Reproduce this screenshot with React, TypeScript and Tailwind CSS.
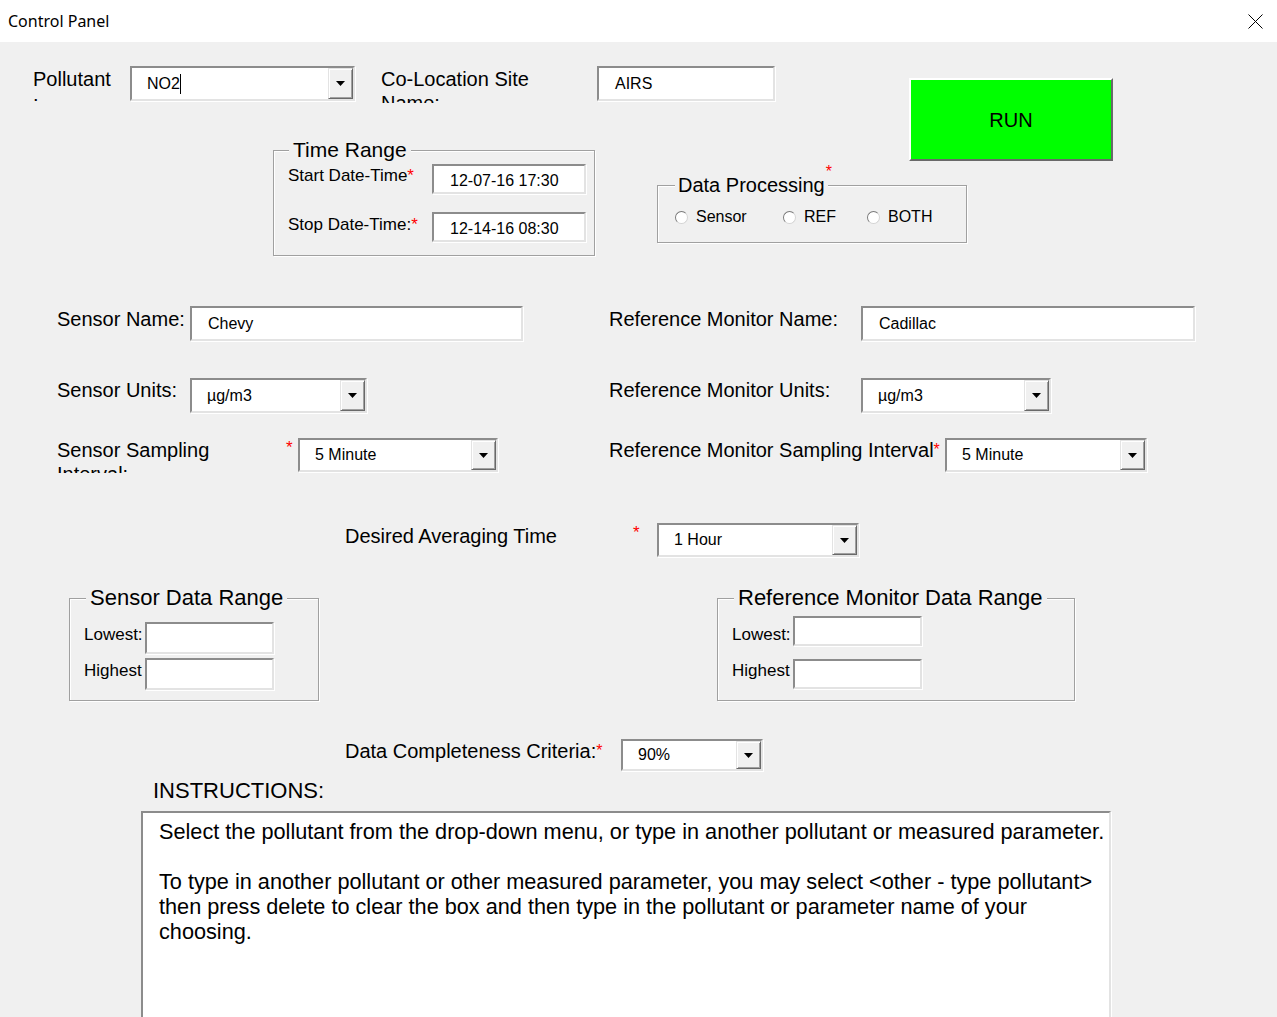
import React from 'react';

// ─── Win32-style borders ──────────────────────────────────────────────────────

const sunken =
  'bg-white border-2 border-t-[#8c8c8c] border-l-[#8c8c8c] border-r-[#e3e3e3] border-b-[#e3e3e3] shadow-[1px_1px_0_#ffffff]';
const etched = 'border border-[#a0a0a0] shadow-[1px_1px_0_#ffffff,inset_1px_1px_0_#ffffff]';
const label = 'shrink-0 whitespace-nowrap text-[20px] leading-[24px]';

const Star = ({ className = '' }: { className?: string }) => (
  <span className={`text-[#ff0000] ${className}`}>*</span>
);

const TextBox = ({ size, value = '', pt = '' }: { size: string; value?: string; pt?: string }) => (
  <div className={`${sunken} ${size} ${pt} shrink-0 flex items-center pl-[16px] text-[16px]`}>{value}</div>
);

const DropButton = () => (
  <div className="w-[25px] h-full shrink-0 bg-[#f0f0f0] border border-t-[#e3e3e3] border-l-[#e3e3e3] border-r-[#696969] border-b-[#696969] shadow-[inset_1px_1px_0_#ffffff,inset_-1px_-1px_0_#a0a0a0] flex items-center justify-center">
    <svg width="9" height="5" viewBox="0 0 9 5">
      <path d="M0 0h9L4.5 5z" fill="#000" />
    </svg>
  </div>
);

const Combo = ({ size, value, caret = false }: { size: string; value: string; caret?: boolean }) => (
  <div className={`${sunken} ${size} shrink-0 flex items-stretch`}>
    <div className="flex-1 flex items-center pl-[15px] text-[16px]">
      {value}
      {caret && <span className="w-px h-[20px] bg-black" />}
    </div>
    <DropButton />
  </div>
);

const Radio = ({ text, width }: { text: string; width: string }) => (
  <div className={`flex items-center gap-[8px] ${width}`}>
    <span className="w-[13px] h-[13px] rounded-full bg-white border border-t-[#7a7a7a] border-l-[#7a7a7a] border-r-[#d4d4d4] border-b-[#d4d4d4]" />
    <span className="text-[16px] leading-[20px]">{text}</span>
  </div>
);

// ─── Page ─────────────────────────────────────────────────────────────────────

export default function App() {
  return (
    <div className="w-[1277px] h-[1017px] overflow-hidden bg-[#f0f0f0] text-black font-['Liberation_Sans',Arial,sans-serif]">
      {/* ── Title bar ── */}
      <div className="h-[42px] bg-white flex items-center justify-between pl-[8px]">
        <span className="text-[16px] font-['Noto_Sans',sans-serif]">Control Panel</span>
        <div className="w-[44px] h-[42px] flex items-center justify-center">
          <svg width="15" height="15" viewBox="0 0 15 15">
            <path d="M0.5 0.5l14 14M14.5 0.5l-14 14" stroke="#000" strokeWidth="1" />
          </svg>
        </div>
      </div>

      <div className="pt-[24px]">
        {/* ── Row 1: pollutant / site / run ── */}
        <div className="flex items-start h-[35px]">
          <div className={`${label} ml-[33px] w-[97px] h-[37px] overflow-hidden pt-[1px]`}>
            Pollutant
            <br />:
          </div>
          <Combo size="w-[225px] h-[35px]" value="NO2" caret />
          <div className={`${label} ml-[26px] w-[216px] h-[37px] overflow-hidden pt-[1px]`}>
            Co-Location Site
            <br />
            Name:
          </div>
          <TextBox size="w-[178px] h-[35px]" value="AIRS" />
          <button className="ml-[134px] mt-[12px] w-[204px] h-[83px] shrink-0 bg-[#00ff00] border-2 border-t-white border-l-white border-r-[#696969] border-b-[#696969] text-[20px] flex items-center justify-center">
            RUN
          </button>
        </div>

        {/* ── Row 2: time range / data processing ── */}
        <div className="flex items-start mt-[37px]">
          <fieldset className={`${etched} ml-[273px] w-[322px] h-[118px] shrink-0 pl-[14px]`}>
            <legend className="ml-[1px] px-[4px] bg-[#f0f0f0] text-[21px] leading-[24px]">Time Range</legend>
            <div className="flex items-start mt-[2px]">
              <div className="w-[144px] shrink-0 whitespace-nowrap text-[17px] leading-[20px] pt-[2px]">
                Start Date-Time<Star />
              </div>
              <TextBox size="w-[154px] h-[30px]" pt="pt-[3px]" value="12-07-16 17:30" />
            </div>
            <div className="flex items-start mt-[18px]">
              <div className="w-[144px] shrink-0 whitespace-nowrap text-[17px] leading-[20px] pt-[3px]">
                Stop Date-Time:<Star />
              </div>
              <TextBox size="w-[154px] h-[30px]" pt="pt-[3px]" value="12-14-16 08:30" />
            </div>
          </fieldset>

          <fieldset className={`${etched} ml-[62px] mt-[35px] w-[310px] h-[70px] shrink-0 pl-[17px]`}>
            <legend className="ml-0 px-[3px] bg-[#f0f0f0] text-[20px] leading-[24px]">
              <span className="relative">
                Data Processing
                <Star className="absolute left-full top-[-10px] ml-[1px] text-[16px] leading-[16px]" />
              </span>
            </legend>
            <div className="flex items-center mt-[10px] h-[20px]">
              <Radio text="Sensor" width="w-[108px]" />
              <Radio text="REF" width="w-[84px]" />
              <Radio text="BOTH" width="w-[90px]" />
            </div>
          </fieldset>
        </div>

        {/* ── Row 3: names ── */}
        <div className="flex items-start mt-[50px]">
          <div className={`${label} ml-[57px] w-[133px] pt-[1px]`}>Sensor Name:</div>
          <TextBox size="w-[333px] h-[35px]" value="Chevy" />
          <div className={`${label} ml-[86px] w-[252px] pt-[1px]`}>Reference Monitor Name:</div>
          <TextBox size="w-[334px] h-[35px]" value="Cadillac" />
        </div>

        {/* ── Row 4: units ── */}
        <div className="flex items-start mt-[37px]">
          <div className={`${label} ml-[57px] w-[133px]`}>Sensor Units:</div>
          <Combo size="w-[177px] h-[35px]" value="µg/m3" />
          <div className={`${label} ml-[242px] w-[252px]`}>Reference Monitor Units:</div>
          <Combo size="w-[190px] h-[35px]" value="µg/m3" />
        </div>

        {/* ── Row 5: sampling interval ── */}
        <div className="flex items-start mt-[25px]">
          <div className={`${label} ml-[57px] w-[229px] h-[35px] overflow-hidden`}>
            Sensor Sampling
            <br />
            Interval:
          </div>
          <Star className="w-[12px] shrink-0 text-[17px] leading-[17px] mt-[1px]" />
          <Combo size="w-[200px] h-[34px]" value="5 Minute" />
          <div className={`${label} ml-[111px] w-[336px]`}>
            Reference Monitor Sampling Interval<Star className="text-[16px] align-top" />
          </div>
          <Combo size="w-[202px] h-[34px]" value="5 Minute" />
        </div>

        {/* ── Row 6: averaging time ── */}
        <div className="flex items-start mt-[50px]">
          <div className={`${label} ml-[345px] w-[288px] pt-[1px]`}>Desired Averaging Time</div>
          <Star className="w-[24px] shrink-0 text-[17px] leading-[17px] mt-[1px]" />
          <Combo size="w-[202px] h-[34px]" value="1 Hour" />
        </div>

        {/* ── Row 7: data ranges ── */}
        <div className="flex items-start mt-[28px]">
          <fieldset className={`${etched} ml-[69px] w-[250px] h-[116px] shrink-0 pl-[14px]`}>
            <legend className="ml-[2px] px-[4px] bg-[#f0f0f0] text-[22px] leading-[26px]">Sensor Data Range</legend>
            <div className="flex items-start mt-[11px]">
              <div className="w-[61px] shrink-0 text-[17px] leading-[20px] pt-[3px]">Lowest:</div>
              <TextBox size="w-[129px] h-[32px]" />
            </div>
            <div className="flex items-start mt-[4px]">
              <div className="w-[61px] shrink-0 text-[17px] leading-[20px] pt-[3px]">Highest</div>
              <TextBox size="w-[129px] h-[32px]" />
            </div>
          </fieldset>

          <fieldset className={`${etched} ml-[398px] w-[358px] h-[116px] shrink-0 pl-[14px]`}>
            <legend className="ml-[2px] px-[4px] bg-[#f0f0f0] text-[22px] leading-[26px]">
              Reference Monitor Data Range
            </legend>
            <div className="flex items-start mt-[5px]">
              <div className="w-[61px] shrink-0 text-[17px] leading-[20px] pt-[9px]">Lowest:</div>
              <TextBox size="w-[129px] h-[30px]" />
            </div>
            <div className="flex items-start mt-[13px]">
              <div className="w-[61px] shrink-0 text-[17px] leading-[20px] pt-[2px]">Highest</div>
              <TextBox size="w-[129px] h-[30px]" />
            </div>
          </fieldset>
        </div>

        {/* ── Row 8: completeness ── */}
        <div className="flex items-start mt-[38px]">
          <div className={`${label} ml-[345px] w-[276px]`}>
            Data Completeness Criteria:<Star className="text-[16px] align-top" />
          </div>
          <Combo size="w-[142px] h-[32px]" value="90%" />
        </div>

        {/* ── Instructions ── */}
        <div className="ml-[153px] mt-[7px] text-[22px] leading-[26px]">INSTRUCTIONS:</div>
        <div className={`${sunken} ml-[141px] mt-[7px] w-[970px] h-[240px] pl-[16px] pt-[6px] text-[21.7px] leading-[25px] whitespace-nowrap`}>
          Select the pollutant from the drop-down menu, or type in another pollutant or measured parameter.
          <br />
          <br />
          To type in another pollutant or other measured parameter, you may select &lt;other - type pollutant&gt;
          <br />
          then press delete to clear the box and then type in the pollutant or parameter name of your
          <br />
          choosing.
        </div>
      </div>
    </div>
  );
}
